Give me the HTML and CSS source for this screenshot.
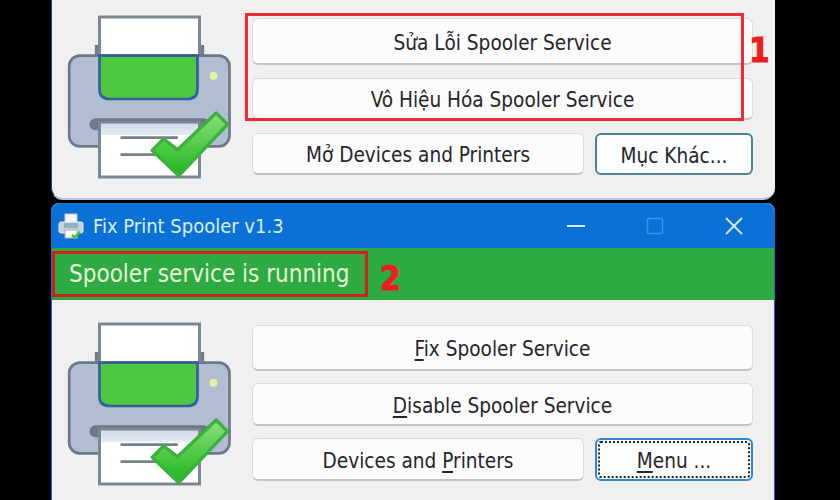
FILE: index.html
```html
<!DOCTYPE html>
<html lang="en">
    <head>
        <meta charset="UTF-8">
        <title>Fix Print Spooler</title>
        <link rel="stylesheet" href="styles.css">
    </head>
    <body>
        <svg class="sprites" width="0" height="0">
            <defs>
                <linearGradient id="checkFill" x1="0" y1="0" x2="0" y2="1">
                    <stop offset="0" stop-color="#8be07a"/>
                    <stop offset="1" stop-color="#1eb61e"/>
                </linearGradient>
                <linearGradient id="paperShade" x1="0" y1="0" x2="0" y2="1">
                    <stop offset="0" stop-color="#cfdbe9"/>
                    <stop offset="1" stop-color="#e4ecf4"/>
                </linearGradient>
                <symbol id="printer" viewBox="50 40 500 510">
                    <rect x="136" y="136" width="328" height="40" fill="#6f7d8c"/>
                    <rect x="150" y="52" width="300" height="130" fill="#fff" stroke="#7c8794" stroke-width="9"/>
                    <rect x="59" y="168" width="481" height="272" rx="32" fill="#b0bdd3" stroke="#6d7989" stroke-width="8"/>
                    <path d="M150 168H444V268Q444 298 414 298H180Q150 298 150 268Z" fill="#4ec93f" stroke="#33609a" stroke-width="8"/>
                    <circle cx="492" cy="228" r="12" fill="#e6f0a0"/>
                    <rect x="120" y="356" width="360" height="36" rx="18" fill="#6d7989"/>
                    <rect x="150" y="368" width="300" height="164" fill="#fff" stroke="#7c8794" stroke-width="9"/>
                    <rect x="155" y="372" width="290" height="34" fill="url(#paperShade)"/>
                    <path d="M213 414H385M213 465H385" stroke="#75818e" stroke-width="8"/>
                    <path d="M308 452 342 418 384 450 500 340 534 374 388 528Z" fill="url(#checkFill)" stroke="#3cb03c" stroke-width="10" stroke-linejoin="round"/>
                </symbol>
            </defs>
        </svg>

        <div class="window window--top">
            <div class="window__body window__body--top">
                <svg class="window__art"><use href="#printer"/></svg>
                <div class="actions actions--top">
                    <button class="actions__btn actions__btn--wide" type="button">Sửa Lỗi Spooler Service</button>
                    <button class="actions__btn actions__btn--wide" type="button">Vô Hiệu Hóa Spooler Service</button>
                    <button class="actions__btn" type="button">Mở Devices and Printers</button>
                    <button class="actions__btn actions__btn--default" type="button">Mục Khác...</button>
                </div>
            </div>
            <div class="mark mark--actions"></div>
            <span class="mark-label mark-label--one">1</span>
        </div>

        <div class="window window--main">
            <div class="titlebar">
                <svg class="titlebar__icon" viewBox="0 0 28 28">
                    <rect x="8" y="2" width="12" height="9" fill="#f4f6f8" stroke="#c6ccd4"/>
                    <rect x="2" y="10" width="24" height="11" rx="2" fill="#c8d0da" stroke="#e6eaee"/>
                    <rect x="7" y="11" width="14" height="5" fill="#8fb2c8"/>
                    <rect x="8" y="18" width="12" height="8" fill="#fff" stroke="#aab2bc"/>
                    <path d="M15 23 17.500 25.500 23 20" fill="none" stroke="#45c045" stroke-width="2.500"/>
                </svg>
                <span class="titlebar__name">Fix Print Spooler v1.3</span>
                <div class="titlebar__controls">
                    <svg class="titlebar__control" viewBox="0 0 18 18"><path d="M0 9H18" stroke="#d8ecff" stroke-width="2"/></svg>
                    <svg class="titlebar__control" viewBox="0 0 18 18"><rect x="1.500" y="1.500" width="15" height="15" rx="1" fill="none" stroke="#3b93e6" stroke-width="1.500"/></svg>
                    <svg class="titlebar__control" viewBox="0 0 18 18"><path d="M1 1 17 17M17 1 1 17" stroke="#d8ecff" stroke-width="1.800"/></svg>
                </div>
            </div>
            <div class="status">Spooler service is running</div>
            <div class="window__body window__body--main">
                <svg class="window__art"><use href="#printer"/></svg>
                <div class="actions actions--main">
                    <button class="actions__btn actions__btn--wide" type="button"><u>F</u>ix Spooler Service</button>
                    <button class="actions__btn actions__btn--wide" type="button"><u>D</u>isable Spooler Service</button>
                    <button class="actions__btn" type="button">Devices and <u>P</u>rinters</button>
                    <button class="actions__btn actions__btn--focus" type="button"><u>M</u>enu ...</button>
                </div>
            </div>
            <div class="mark mark--status"></div>
            <span class="mark-label mark-label--two">2</span>
        </div>
    </body>
</html>
```

FILE: styles.css
```css
html, body{
    margin: 0;
}

body{
    width: 840px;
    height: 500px;
    overflow: hidden;
    background: #000;
    display: flex;
    flex-direction: column;
    gap: 3px;
    font-family: "DejaVu Sans Condensed", "DejaVu Sans", sans-serif;
}

.sprites{
    position: absolute;
}

.window{
    position: relative;
    box-sizing: border-box;
    width: 724px;
    margin-left: 51px;
    background: #f0f0f0;
}

.window--top{
    height: 200px;
    border-left: 1px solid #26407a;
    border-bottom: 2px solid #b9c9dc;
    border-radius: 0 0 12px 12px;
}

.window--main{
    height: 297px;
    border-left: 1px solid #0a72d6;
    border-right: 1px solid #0a72d6;
    border-radius: 8px 8px 0 0;
}

.window__body{
    display: flex;
    gap: 18px;
    padding-left: 15px;
}

.window__body--top{
    padding-top: 18px;
}

.window__body--main{
    padding-top: 25px;
}

.window__art{
    width: 167px;
    height: 170px;
    margin-left: -1px;
    margin-top: -5px;
}

.actions{
    display: grid;
    width: 501px;
    margin-left: 1px;
    grid-template-columns: 332px 158px;
    column-gap: 11px;
}

.actions--top{
    grid-template-rows: 47px 42px 42px;
    row-gap: 13px;
}

.actions--main{
    grid-template-rows: 46px 43px 43px;
    row-gap: 12px;
}

.actions__btn{
    padding: 3px 0 0;
    font-family: inherit;
    font-size: 20.6px;
    color: #26262a;
    background: #fcfcfc;
    border: 1px solid #dcdcdc;
    border-bottom: 2px solid #c4c4c4;
    border-radius: 6px;
}

.actions__btn u{
    text-underline-offset: 3px;
}

.actions__btn--wide{
    grid-column: 1 / -1;
}

.actions__btn--default{
    background: #fbfdfe;
    border: 2px solid #4f8196;
}

.actions__btn--focus{
    background: #fdfdfd;
    border: 2px solid #2f86d2;
    outline: 2px dotted #222;
    outline-offset: -5px;
}

.titlebar{
    height: 45px;
    display: flex;
    align-items: center;
    padding-left: 5px;
    background: #0a72d6;
    border-radius: 8px 8px 0 0;
}

.titlebar__icon{
    width: 28px;
    height: 28px;
}

.titlebar__name{
    margin-left: 8px;
    font-size: 20px;
    color: #dcefff;
}

.titlebar__controls{
    margin-left: auto;
    display: flex;
    gap: 61px;
    padding-right: 31px;
}

.titlebar__control{
    width: 18px;
    height: 18px;
}

.status{
    height: 52px;
    box-sizing: border-box;
    display: flex;
    align-items: center;
    padding-left: 17px;
    background: #2eaa42;
    font-size: 24px;
    color: #e8f8d8;
}

.mark{
    position: absolute;
    box-sizing: border-box;
    border: 3px solid #ee2b30;
}

.mark--actions{
    left: 193px;
    top: 13px;
    width: 499px;
    height: 108px;
}

.mark--status{
    left: 0;
    top: 48px;
    width: 316px;
    height: 46px;
    border-color: #d11f1f;
}

.mark-label{
    position: absolute;
    font-weight: 700;
    line-height: 1;
    font-size: 33px;
    color: #ee1c22;
    -webkit-text-stroke: 1px #ee1c22;
}

.mark-label--one{
    left: 697px;
    top: 34px;
}

.mark-label--two{
    left: 328px;
    top: 59px;
}
```
